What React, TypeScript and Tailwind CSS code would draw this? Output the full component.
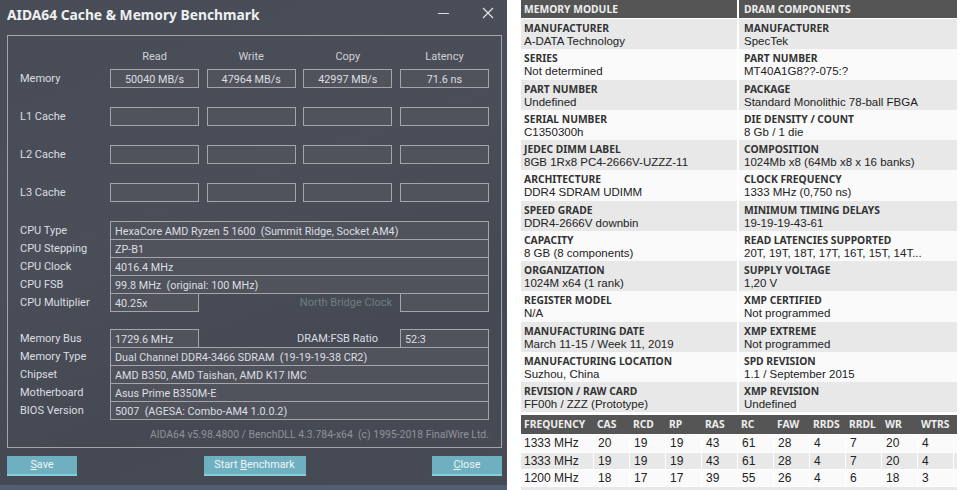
import React from "react";

const benchRows = [
  { label: "Memory", values: ["50040 MB/s", "47964 MB/s", "42997 MB/s", "71.6 ns"] },
  { label: "L1 Cache", values: ["", "", "", ""] },
  { label: "L2 Cache", values: ["", "", "", ""] },
  { label: "L3 Cache", values: ["", "", "", ""] },
];

const moduleRows = [
  ["MANUFACTURER", "A-DATA Technology", "MANUFACTURER", "SpecTek"],
  ["SERIES", "Not determined", "PART NUMBER", "MT40A1G8??-075:?"],
  ["PART NUMBER", "Undefined", "PACKAGE", "Standard Monolithic 78-ball FBGA"],
  ["SERIAL NUMBER", "C1350300h", "DIE DENSITY / COUNT", "8 Gb / 1 die"],
  ["JEDEC DIMM LABEL", "8GB 1Rx8 PC4-2666V-UZZZ-11", "COMPOSITION", "1024Mb x8 (64Mb x8 x 16 banks)"],
  ["ARCHITECTURE", "DDR4 SDRAM UDIMM", "CLOCK FREQUENCY", "1333 MHz (0,750 ns)"],
  ["SPEED GRADE", "DDR4-2666V downbin", "MINIMUM TIMING DELAYS", "19-19-19-43-61"],
  ["CAPACITY", "8 GB (8 components)", "READ LATENCIES SUPPORTED", "20T, 19T, 18T, 17T, 16T, 15T, 14T..."],
  ["ORGANIZATION", "1024M x64 (1 rank)", "SUPPLY VOLTAGE", "1,20 V"],
  ["REGISTER MODEL", "N/A", "XMP CERTIFIED", "Not programmed"],
  ["MANUFACTURING DATE", "March 11-15 / Week 11, 2019", "XMP EXTREME", "Not programmed"],
  ["MANUFACTURING LOCATION", "Suzhou, China", "SPD REVISION", "1.1 / September 2015"],
  ["REVISION / RAW CARD", "FF00h / ZZZ (Prototype)", "XMP REVISION", "Undefined"],
];

const timingHead = ["FREQUENCY", "CAS", "RCD", "RP", "RAS", "RC", "FAW", "RRDS", "RRDL", "WR", "WTRS"];
const timingRows = [
  ["1333 MHz", "20", "19", "19", "43", "61", "28", "4", "7", "20", "4"],
  ["1333 MHz", "19", "19", "19", "43", "61", "28", "4", "7", "20", "4"],
  ["1200 MHz", "18", "17", "17", "39", "55", "26", "4", "6", "18", "3"],
];

const Box = ({ children, className = "" }: { children?: React.ReactNode; className?: string }) => (
  <div className={`h-[19px] border border-[#a3a5a9] bg-[#50535c] text-[10.8px] leading-[19px] whitespace-pre ${className}`}>
    {children}
  </div>
);

const InfoRow = ({ label, value }: { label: string; value: string }) => (
  <div className="flex h-[18px] items-center">
    <div className="w-[90px] shrink-0 whitespace-nowrap pt-[2px]">{label}</div>
    <Box className="flex-1 pl-1 text-left">{value}</Box>
  </div>
);

const DarkButton = ({ pre, u, post, className }: { pre?: string; u: string; post?: string; className: string }) => (
  <div className={`flex h-5 items-center justify-center whitespace-pre border-b-2 border-[#7fd0dc] bg-[#6fb0c0] pt-[1px] text-[10.8px] text-[#f0f4f5] ${className}`}>
    {pre}
    <span className="underline">{u}</span>
    {post}
  </div>
);

const App = () => {
  return (
    <div className="flex h-[490px] w-[960px] overflow-hidden bg-white">
      {/* benchmark window */}
      <div className="flex h-full w-[507px] shrink-0 flex-col bg-[#474b55] bg-[linear-gradient(160deg,#484c56_0%,#4a4e58_40%,#454953_70%,#474b55_100%)] font-['Roboto',sans-serif] text-[11px] text-[#dcdee2]">
        <div className="flex h-[35px] shrink-0 items-start justify-between pl-[7px] pr-[13px] pt-[5px]">
          <div className="font-['Noto_Sans',sans-serif] text-[13.8px] leading-[20px] font-bold text-[#eef0f2]">AIDA64 Cache &amp; Memory Benchmark</div>
          <div className="flex items-center gap-[32px] pt-[2px]">
            <svg width="12" height="12" viewBox="0 0 12 12" className="text-[#d8dade]">
              <path d="M0 6.5h11" stroke="currentColor" strokeWidth="1" />
            </svg>
            <svg width="12" height="12" viewBox="0 0 12 12" className="text-[#e2e4e6]">
              <path d="M1 1l10 10M11 1L1 11" stroke="currentColor" strokeWidth="1.2" />
            </svg>
          </div>
        </div>

        <div className="mx-[7px] flex h-[413px] w-[495px] shrink-0 flex-col border border-[#a3a5a9] px-[12px]">
          <div className="ml-[90px] grid h-[33px] shrink-0 grid-cols-4 gap-x-[7.5px] pt-[13px] text-center text-[#cfd1d5]">
            {["Read", "Write", "Copy", "Latency"].map((h) => (
              <div key={h} className="leading-[16px]">{h}</div>
            ))}
          </div>
          <div className="flex flex-col gap-[19px]">
            {benchRows.map((row) => (
              <div key={row.label} className="flex items-center">
                <div className="w-[90px] shrink-0 pt-[2px]">{row.label}</div>
                <div className="grid flex-1 grid-cols-4 gap-x-[7.5px] text-center">
                  {row.values.map((v, i) => (
                    <Box key={i}>{v}</Box>
                  ))}
                </div>
              </div>
            ))}
          </div>

          <div className="mt-[19px] flex flex-col">
            <InfoRow label="CPU Type" value="HexaCore AMD Ryzen 5 1600  (Summit Ridge, Socket AM4)" />
            <InfoRow label="CPU Stepping" value="ZP-B1" />
            <InfoRow label="CPU Clock" value="4016.4 MHz" />
            <InfoRow label="CPU FSB" value="99.8 MHz  (original: 100 MHz)" />
            <div className="flex h-[18px] items-center">
              <div className="w-[90px] shrink-0 whitespace-nowrap pt-[2px]">CPU Multiplier</div>
              <Box className="w-[89px] pl-1">40.25x</Box>
              <div className="flex-1 pr-2 pt-[2px] text-right text-[#6d7f80]">North Bridge Clock</div>
              <Box className="w-[89px] pl-1"></Box>
            </div>
          </div>

          <div className="mt-[18px] flex flex-col">
            <div className="flex h-[18px] items-center">
              <div className="w-[90px] shrink-0 whitespace-nowrap pt-[2px]">Memory Bus</div>
              <Box className="w-[89px] pl-1">1729.6 MHz</Box>
              <div className="flex-1 pr-[22px] pt-[2px] text-right">DRAM:FSB Ratio</div>
              <Box className="w-[89px] pl-1">52:3</Box>
            </div>
            <InfoRow label="Memory Type" value="Dual Channel DDR4-3466 SDRAM  (19-19-19-38 CR2)" />
            <InfoRow label="Chipset" value="AMD B350, AMD Taishan, AMD K17 IMC" />
            <InfoRow label="Motherboard" value="Asus Prime B350M-E" />
            <InfoRow label="BIOS Version" value="5007  (AGESA: Combo-AM4 1.0.0.2)" />
          </div>

          <div className="mt-[8px] whitespace-pre text-right text-[10.45px] text-[#8f9298]">
            AIDA64 v5.98.4800 / BenchDLL 4.3.784-x64  (c) 1995-2018 FinalWire Ltd.
          </div>
        </div>

        <div className="mx-[7px] mt-[8px] flex w-[495px] justify-between">
          <DarkButton u="S" post="ave" className="w-[70px]" />
          <DarkButton pre="Start " u="B" post="enchmark" className="w-[102px]" />
          <DarkButton u="C" post="lose" className="w-[70px]" />
        </div>
        <div className="mt-auto h-[5px] bg-[#505f72]" />
      </div>

      {/* spd info */}
      <div className="ml-[14px] flex h-full w-[436px] shrink-0 flex-col font-['Liberation_Sans',sans-serif] text-[11.5px] text-[#222]">
        <div className="grid h-[19px] shrink-0 grid-cols-[216px_1fr] gap-x-[2px] bg-white font-['Noto_Sans',sans-serif] text-[10.3px] font-bold text-[#eee]">
          <div className="h-[18px] bg-[#555] pl-[3px] leading-[18px]">MEMORY MODULE</div>
          <div className="h-[18px] bg-[#555] pl-[5px] leading-[18px]">DRAM COMPONENTS</div>
        </div>
        <div className="flex flex-col">
          {moduleRows.map((r, i) => (
            <div key={i} className={`grid h-[30.25px] grid-cols-[216px_1fr] gap-x-[2px] ${i % 2 === 0 ? "[&>div]:bg-[#e8e8e8]" : "[&>div]:bg-[#fafafa]"}`}>
              <div className="pl-[3px] pt-[2px]">
                <div className="font-['Noto_Sans',sans-serif] text-[10.3px] leading-[14px] font-bold text-[#333]">{r[0]}</div>
                <div className="whitespace-nowrap leading-[13px]">{r[1]}</div>
              </div>
              <div className="pl-[5px] pt-[2px]">
                <div className="font-['Noto_Sans',sans-serif] text-[10.3px] leading-[14px] font-bold text-[#333]">{r[2]}</div>
                <div className="whitespace-nowrap leading-[13px]">{r[3]}</div>
              </div>
            </div>
          ))}
        </div>
        <div className="mt-[3px] flex h-[19px] shrink-0 items-center bg-[#555] font-['Noto_Sans',sans-serif] text-[10.3px] font-bold text-[#eee]">
          {timingHead.map((h, i) => (
            <div key={h} className={`pl-[3px] ${i === 0 ? "w-[73px]" : "w-[36px]"}`}>{h}</div>
          ))}
        </div>
        {timingRows.map((r, i) => (
          <div key={i} className={`flex h-[17.3px] shrink-0 border-t border-white text-[12px] leading-[17px] ${i === 1 ? "bg-[#e8e8e8]" : "bg-[#fafafa]"}`}>
            {r.map((c, j) => (
              <div key={j} className={`border-r border-white ${j === 0 ? "w-[73px] pl-[3px]" : "w-[36px] pl-[4px]"}`}>{c}</div>
            ))}
          </div>
        ))}
        <div className="mt-[1px] h-[4px] bg-[#e8e8e8]" />
      </div>
    </div>
  );
};

export default App;
